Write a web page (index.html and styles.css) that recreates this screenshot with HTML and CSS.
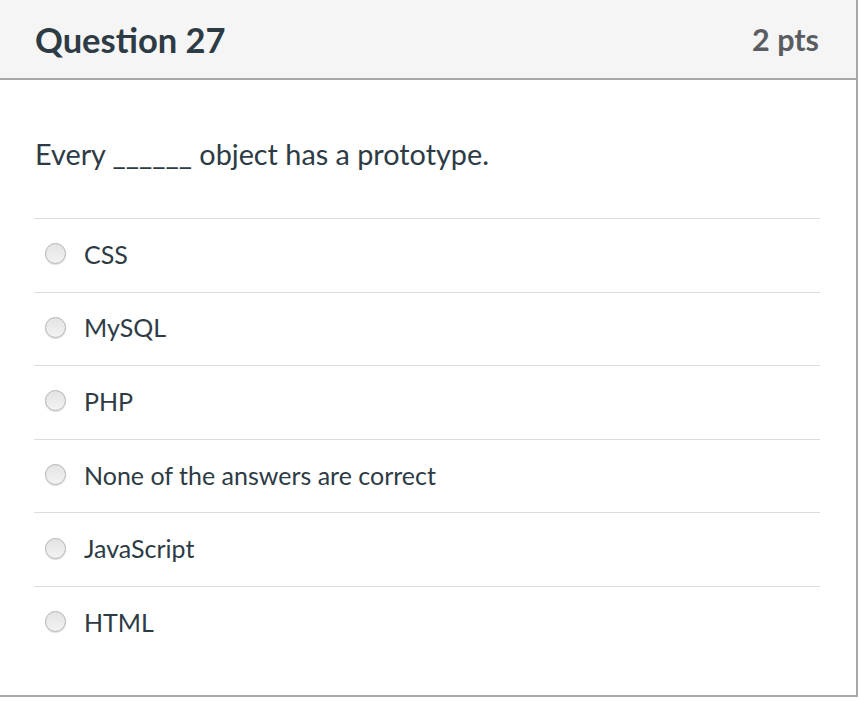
FILE: index.html
```html
<!DOCTYPE html>
<html>
<head>
<meta charset="utf-8">
<link rel="stylesheet" href="styles.css">
</head>
<body>
<div class="card">
  <div class="header">
    <h2 class="title">Question 27</h2>
    <div class="pts">2 pts</div>
  </div>
  <div class="content">
    <p class="question">Every ______ object has a prototype.</p>
    <div class="answers">
      <label class="answer"><span class="radio"></span><span class="label">CSS</span></label>
      <label class="answer"><span class="radio"></span><span class="label">MySQL</span></label>
      <label class="answer"><span class="radio"></span><span class="label">PHP</span></label>
      <label class="answer"><span class="radio"></span><span class="label">None of the answers are correct</span></label>
      <label class="answer"><span class="radio"></span><span class="label">JavaScript</span></label>
      <label class="answer"><span class="radio"></span><span class="label">HTML</span></label>
    </div>
  </div>
</div>
</body>
</html>
```
FILE: styles.css
```css
html, body {
  margin: 0;
  padding: 0;
  background: #ffffff;
}
body {
  font-family: Lato, "Open Sans", sans-serif;
  color: #2d3b45;
}
.card {
  width: 856px;
  border-right: 2px solid #a8a8a8;
  border-bottom: 2px solid #a8a8a8;
  padding-bottom: 35px;
}
.header {
  box-sizing: border-box;
  height: 80px;
  background: #f5f5f5;
  border-bottom: 2px solid #a8a8a8;
  display: flex;
  align-items: center;
  justify-content: space-between;
  padding: 0 37px 0 35px;
}
.title {
  margin: 0;
  font-size: 34.5px;
  font-weight: 700;
  color: #2d3b45;
}
.pts {
  font-size: 30.5px;
  font-weight: 700;
  color: #595d61;
}
.content {
  padding: 0 36px 0 34px;
}
.question {
  margin: 0;
  padding: 55px 0 44px 1px;
  font-size: 28.8px;
  line-height: 39px;
}
.answer {
  display: flex;
  align-items: center;
  height: 73.6px;
  box-sizing: border-box;
  border-top: 1px solid #dcdcdc;
  padding-left: 11px;
  padding-bottom: 3px;
}
.radio {
  width: 19px;
  height: 19px;
  border-radius: 50%;
  border: 1.5px solid #b3b3b3;
  background: linear-gradient(#e3e3e3, #f3f3f3);
  box-shadow: 0 1px 1px rgba(0,0,0,0.15);
  flex-shrink: 0;
}
.label {
  margin-left: 18px;
  font-size: 25px;
}
```
